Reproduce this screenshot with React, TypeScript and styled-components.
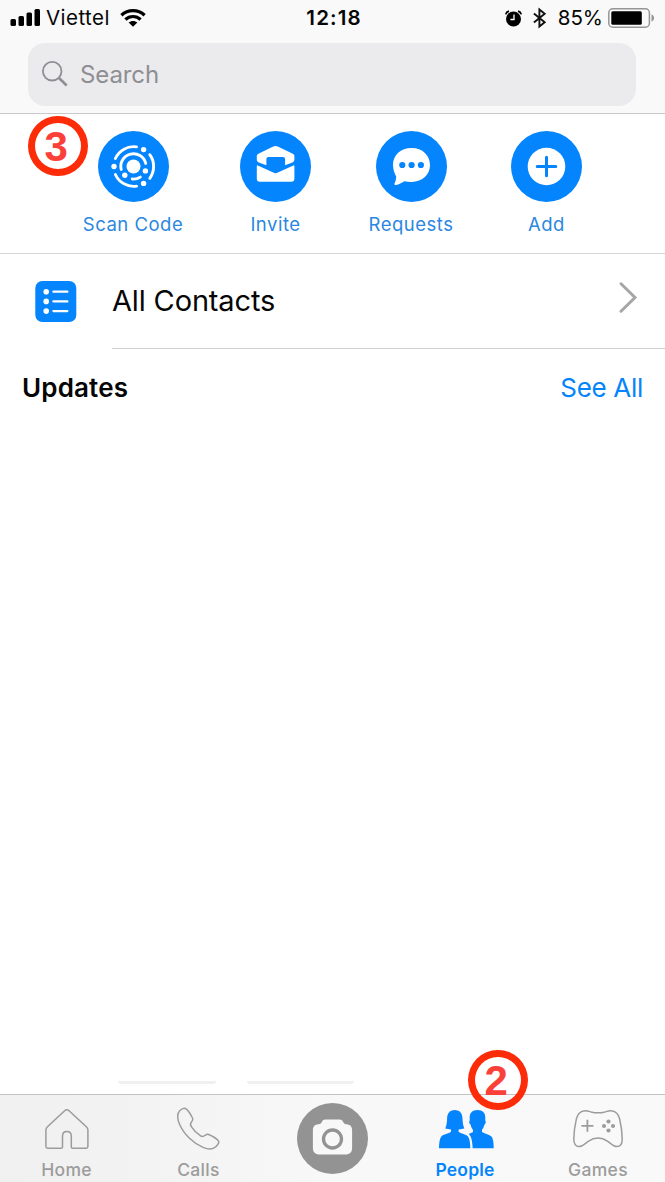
import React from "react";
import styled, { createGlobalStyle } from "styled-components";

const BLUE = "#0484fd";
const GREY = "#9c9c9c";

const GlobalStyle = createGlobalStyle`
  *, *::before, *::after { box-sizing: border-box; }
  body { margin: 0; background: #fff; }
  svg { display: block; flex: none; overflow: visible; }
`;

const Screen = styled.div`
  position: relative;
  display: flex;
  flex-direction: column;
  width: 665px;
  height: 1182px;
  overflow: hidden;
  background: #fff;
  color: #060606;
  font-family: Inter, "Liberation Sans", sans-serif;
`;

const Header = styled.header`
  flex: none;
  height: 114px;
  background: #f9f9f9;
  border-bottom: 1px solid #c9c9cb;
`;

const StatusBar = styled.div`
  display: grid;
  grid-template-columns: 1fr auto 1fr;
  align-items: center;
  height: 42px;
  padding: 0 10px 6px;
`;

const StatusGroup = styled.div<{ $end?: boolean }>`
  display: flex;
  align-items: center;
  justify-content: ${(p) => (p.$end ? "flex-end" : "flex-start")};
`;

const Carrier = styled.span`
  margin: 0 10px 0 6px;
  font-size: 20.5px;
  line-height: 24px;
  letter-spacing: 0.45px;
`;

const Clock = styled.span`
  padding-left: 3px;
  font-size: 20.5px;
  line-height: 24px;
  font-weight: 600;
  letter-spacing: 1.1px;
`;

const Percent = styled.span`
  margin: 0 5px 0 12px;
  font-size: 20.5px;
  line-height: 24px;
  letter-spacing: 0;
`;

const StatusIcons = styled.span`
  display: flex;
  align-items: center;
  gap: 11px;
`;

const SearchField = styled.div`
  display: flex;
  align-items: center;
  gap: 12px;
  width: 608px;
  height: 63px;
  margin: 1px 0 0 28px;
  padding: 0 0 1px 14px;
  border-radius: 17px;
  background: #ebebed;
  color: #8e8e93;
  font-size: 24px;
  letter-spacing: -0.1px;
`;

const Actions = styled.nav`
  display: flex;
  flex: none;
  justify-content: center;
  height: 140px;
  padding: 17px 0 0 8px;
  border-bottom: 1px solid #d6d6d8;
`;

const Action = styled.div<{ $width: number }>`
  display: flex;
  flex-direction: column;
  align-items: center;
  gap: 10px;
  width: ${(p) => p.$width}px;
  color: #2b87e0;
  font-size: 18.5px;
  line-height: 24px;
  letter-spacing: 0.5px;
  white-space: nowrap;
`;

const ContactsRow = styled.div`
  display: flex;
  flex: none;
  align-items: center;
  height: 95px;
  padding-left: 35px;
`;

const ContactsBody = styled.div`
  display: flex;
  flex: 1;
  align-items: center;
  justify-content: space-between;
  height: 95px;
  margin-left: 35px;
  padding: 0 28px 0 0;
  border-bottom: 1px solid #d0d0d2;
  font-size: 29px;
  letter-spacing: -0.15px;
`;

const ContactsLabel = styled.span`
  padding-bottom: 2px;
`;

const ChevronSlot = styled.span`
  padding-bottom: 8px;
`;

const Updates = styled.div`
  display: flex;
  justify-content: space-between;
  flex: 1;
  padding: 23px 22px 0;
  font-size: 26px;
  line-height: 32px;
`;

const Heading = styled.h2`
  margin: 0;
  font-size: 26px;
  font-weight: 600;
  letter-spacing: 0.15px;
`;

const SeeAll = styled.span`
  color: ${BLUE};
  letter-spacing: -0.3px;
`;

const CardEdges = styled.div`
  display: flex;
  flex: none;
  gap: 31px;
  height: 13px;
  padding-left: 118px;
`;

const CardEdge = styled.div<{ $width: number }>`
  width: ${(p) => p.$width}px;
  height: 3px;
  border-radius: 0 0 5px 5px;
  background: #f0f0f0;
`;

const TabBar = styled.nav`
  display: grid;
  flex: none;
  grid-template-columns: repeat(5, 1fr);
  height: 88px;
  border-top: 1px solid #c3c3c5;
  background: linear-gradient(90deg, #f1f0f0 0, #f4f3f3 160px, #f8f8f8 330px, #f9f9f9 100%);
`;

const Tab = styled.div<{ $active?: boolean; $trim?: number }>`
  display: flex;
  flex-direction: column;
  align-items: center;
  justify-content: space-between;
  padding: 8px ${(p) => p.$trim ?? 0}px 1px 0;
  color: ${(p) => (p.$active ? BLUE : GREY)};
  font-size: 17.5px;
  line-height: 22px;
  font-weight: ${(p) => (p.$active ? 600 : 500)};
  letter-spacing: ${(p) => (p.$active ? 0.15 : 0.3)}px;
`;

const Step = styled.div<{ $left: number; $top: number }>`
  position: absolute;
  left: ${(p) => p.$left}px;
  top: ${(p) => p.$top}px;
  display: flex;
  align-items: center;
  justify-content: center;
  width: 59.5px;
  height: 60px;
  padding: 2px 3px 0 0;
  border: 7px solid #fc2b08;
  border-radius: 50%;
  color: #fb4039;
  font: bold 42px/46px "Liberation Sans", sans-serif;
`;

const Signal = () => (
  <svg width="30" height="18" viewBox="0 0 30 18">
    <rect x="0.5" y="10" width="5.5" height="7" rx="1.5" />
    <rect x="8.5" y="7" width="5.5" height="10" rx="1.5" />
    <rect x="16.5" y="3.5" width="5.5" height="13.5" rx="1.5" />
    <rect x="24.5" y="0" width="5.5" height="17" rx="1.5" />
  </svg>
);

const Wifi = () => (
  <svg width="26" height="18" viewBox="0 0 26 18">
    <g fill="none" stroke="#000" strokeWidth="3.2">
      <path d="M1.400 6.200C8 .2 18 .2 24.600 6.200" />
      <path d="M5.400 10.500c4.300-4 10.900-4 15.200 0" />
    </g>
    <path d="M8.600 13.600c2.500-2.300 6.300-2.300 8.800 0L13 17.800Z" />
  </svg>
);

const Alarm = () => (
  <svg width="17" height="17" viewBox="0 0 17 17">
    <circle cx="8.5" cy="9" r="7.5" />
    <path d="M.7 4.400C1.100 2.800 2.400 1.500 4 1.100M16.300 4.400C15.900 2.800 14.600 1.500 13 1.100" fill="none" stroke="#000" strokeWidth="1.700" />
    <path d="M9 4.500v5H5.400" fill="none" stroke="#fff" strokeWidth="1.300" />
  </svg>
);

const Bluetooth = () => (
  <svg width="13" height="20" viewBox="0 0 13 20">
    <path d="m.9 5.400 10.800 8.800-5.300 4.400V1.400l5.300 4.400L.9 14.600" fill="none" stroke="#111" strokeWidth="1.900" />
  </svg>
);

const Battery = () => (
  <svg width="47" height="20" viewBox="0 0 47 20">
    <rect x="0.8" y="0.8" width="40.6" height="18.4" rx="4" fill="none" stroke="#969696" strokeWidth="1.5" />
    <rect x="3.3" y="3.2" width="30.5" height="13.6" rx="1.5" />
    <path d="M43.5 6.500c3.500 1.200 3.500 5.800 0 7Z" fill="#969696" />
  </svg>
);

const SearchIcon = () => (
  <svg width="26" height="26" viewBox="0 0 26 26" fill="none" stroke="#8e8e93">
    <circle cx="10.2" cy="10.2" r="9.3" strokeWidth="1.8" />
    <path d="m17 17 7.700 7.500" strokeWidth="2.6" />
  </svg>
);

const ScanIcon = () => (
  <svg width="71" height="71" viewBox="0 0 71 71">
    <circle cx="35.5" cy="35.5" r="35.5" fill={BLUE} />
    <g fill="none" stroke="#fff" strokeWidth="2.9" strokeLinecap="round">
      <path d="M38.500 15.900A19.900 19.900 0 0 0 17.400 27.500" />
      <path d="M17.400 43.500A19.900 19.900 0 0 0 38.500 55.100" />
      <path d="M51.800 23.700A20.100 20.100 0 0 1 51.800 47.300" />
      <path d="M23.200 38.400A12.600 12.600 0 1 1 47.700 32.400" />
      <path d="M34.200 48A12.600 12.600 0 0 0 42.300 46.100" />
    </g>
    <g fill="#fff">
      <circle cx="35.5" cy="35.5" r="7" />
      <circle cx="45.6" cy="18.6" r="2.7" />
      <circle cx="16" cy="35.5" r="2.7" />
      <circle cx="45.6" cy="52.4" r="2.7" />
      <circle cx="26.8" cy="44.3" r="2.7" />
      <circle cx="47.4" cy="39.9" r="2.7" />
    </g>
  </svg>
);

const InviteIcon = () => (
  <svg width="71" height="71" viewBox="0 0 71 71">
    <circle cx="35.5" cy="35.5" r="35.5" fill={BLUE} />
    <g fill="#fff">
      <path d="M16.800 25.200c0-1 .6-1.900 1.600-2.400l14.800-7.400c1.500-.7 3.100-.7 4.600 0l15 7.400c1 .5 1.600 1.400 1.600 2.400v3.400c0 1.400-.8 2.400-2 3l-7.300 2.600V28c0-1.300-.9-2.100-2.100-2.100H28.500c-1.200 0-2.100.8-2.100 2.100v6.200l-7.600-2.700c-1.200-.5-2-1.500-2-2.900Z" />
      <path d="M16.800 35c0-.5.5-.8 1-.6l15.500 7.200c1.500.8 3 .8 4.500 0l15.600-7.200c.5-.2 1 .1 1 .6v12.800a3 3 0 0 1-3 3H19.800a3 3 0 0 1-3-3Z" />
    </g>
  </svg>
);

const RequestsIcon = () => (
  <svg width="71" height="71" viewBox="0 0 71 71">
    <circle cx="35.5" cy="35.5" r="35.5" fill={BLUE} />
    <path d="M35.600 17C24.600 17 17 24.300 17 33.800c0 5 1.500 8.600 3.200 11.700 0 2.700-.7 5-1.700 7.100-.5 1.100.2 1.700 1.400 1.400 3.400-.7 5.500-2.200 8.500-3.800 2.100.5 4.600.7 7.200.7C46.600 50.900 54 43.500 54 34S46.600 17 35.600 17Z" fill="#fff" />
    <g fill={BLUE}>
      <circle cx="26.3" cy="34" r="3.1" />
      <circle cx="35.6" cy="34" r="3.1" />
      <circle cx="44.9" cy="34" r="3.1" />
    </g>
  </svg>
);

const AddIcon = () => (
  <svg width="71" height="71" viewBox="0 0 71 71">
    <circle cx="35.5" cy="35.5" r="35.5" fill={BLUE} />
    <circle cx="35.5" cy="35.5" r="18.8" fill="#fff" />
    <path d="M35.500 26.200v18.600M26.200 35.500h18.600" stroke={BLUE} strokeWidth="3" strokeLinecap="round" />
  </svg>
);

const ListIcon = () => (
  <svg width="42" height="41" viewBox="0 0 42 41">
    <rect x="0.3" y="0" width="41" height="41" rx="7" fill={BLUE} />
    <g fill="#fff">
      <circle cx="11.2" cy="10.7" r="2.8" />
      <circle cx="11.2" cy="20.4" r="2.8" />
      <circle cx="11.2" cy="30.1" r="2.8" />
    </g>
    <path d="M18.400 10.700h14M18.400 20.400h14M18.400 30.100h14" stroke="#fff" strokeWidth="2.2" strokeLinecap="round" />
  </svg>
);

const Chevron = () => (
  <svg width="18" height="31" viewBox="0 0 18 31">
    <path d="m2 1.800 14 13.700L2 29.200" fill="none" stroke="#a6a6a6" strokeWidth="3" strokeLinecap="round" />
  </svg>
);

const HomeIcon = () => (
  <svg width="44" height="47" viewBox="0 0 44 47" fill="none" stroke={GREY} strokeWidth="1.5">
    <path d="M.9 27c0-1.300.4-2.100 1.300-3L19.400 8c1.500-1.500 3.300-1.500 4.900 0l17.300 16c.9.900 1.300 1.700 1.300 3v16.500c0 1.100-.6 1.700-1.700 1.700H27.600c-.8 0-1.300-.5-1.300-1.300V33.300c0-2.900-1.700-4.700-4.400-4.700s-4.400 1.800-4.400 4.700v10.600c0 .8-.5 1.300-1.300 1.300H2.600c-1.100 0-1.700-.6-1.700-1.700Z" />
  </svg>
);

const PhoneIcon = () => (
  <svg width="43" height="47" viewBox="0 0 44 47" fill="none" stroke={GREY} strokeWidth="1.5">
    <path d="M3 7.200C5 5.300 7 4.300 8.600 5.100c2.700 1.300 5.700 6.600 7.400 10 .7 1.500-.2 2.600-1.100 3.700-1.300 1.600-1.700 2.600-.4 4.600 2.300 3.800 5.800 7.200 9.700 9.700 2 1.200 3 .7 4.600-.6 1.100-.8 2.100-1.500 3.600-.8 3.600 1.600 8.300 4.200 10 6.500 1 1.300-.4 3.700-2.400 5.700-3.200 3.200-8.500 3.100-13.300.9C16.500 40.500 7 31.400 2.500 20.900.8 16.900-.6 10.900 3 7.200Z" />
  </svg>
);

const CameraIcon = () => (
  <svg width="71" height="71" viewBox="0 0 71 71">
    <circle cx="35.5" cy="35.5" r="35.5" fill="#939393" />
    <path d="M28.500 16.500h14c2 0 2.900.8 3.700 2.500.7 1.500 1.700 2.200 3.300 2.200 3.600.2 5.600 2.200 5.600 5.800v17.700c0 4.500-2.300 6.800-6.800 6.800H22.700c-4.500 0-6.800-2.300-6.800-6.800V27c0-3.600 2-5.600 5.600-5.800 1.600 0 2.600-.7 3.300-2.200.8-1.700 1.700-2.500 3.700-2.500Z" fill="#f8f8f8" />
    <circle cx="35.5" cy="36" r="9" fill="none" stroke="#939393" strokeWidth="3.300" />
  </svg>
);

const PeopleIcon = () => (
  <svg width="52" height="47" viewBox="0 0 52 47" fill={BLUE}>
    <path d="M15.800 7C10.600 7 8.300 10.500 8.100 15.500 8 19.500 7.400 22.500 6.300 25.600c1.600.3 3.500.6 5.700.8v2.300C9.500 30.800 4.500 31 2.500 33.300.7 35.500 0 40 0 45.300h31.300c0-5.300-.7-9.800-2.500-12-2-2.300-6.700-2.500-9.200-4.600v-2.300c2.200-.2 4.100-.5 5.700-.8-1.100-3.100-1.700-6.100-1.800-10.100C23.300 10.500 21 7 15.800 7Z" />
    <path d="M38.500 7c-5.300 0-8 3-7.800 8l.1 2.600c-1.100.6-.6 3.600.9 4.200.3 2.200 1.100 3.700 2.300 5v2.300l-4.300 2c2.700 2.500 3.400 6 4 14.200h21c0-5.300-.5-9.700-2.300-11.700-1.900-2.100-6.300-2.600-9.400-4.500v-2.300c1.200-1.300 2-2.800 2.300-5 1.500-.6 2-3.600.9-4.200l.1-2.600C46.500 10 43.800 7 38.500 7Z" />
  </svg>
);

const GamesIcon = () => (
  <svg width="50" height="47" viewBox="0 0 50 47" fill="none" stroke={GREY} strokeWidth="1.5">
    <path d="M10.500 8c2.800-.6 4.600.1 7.500.9 4.500 1.100 9.500 1.100 14 0 2.900-.8 4.700-1.500 7.500-.9 3.800.7 6 3.400 7.100 7.800 1.600 6.700 2.500 13.700 2.600 20.200 0 4.800-1.800 7.600-5.200 7.600-3.700 0-6.200-3.200-9.200-5.300-6.200-4.200-13.400-4.200-19.600 0-3 2.100-5.500 5.300-9.200 5.300C2.600 43.600.8 40.800.8 36c.1-6.500 1-13.500 2.600-20.200C4.500 11.400 6.700 8.700 10.500 8Z" />
    <path d="M14.400 16.800v12M8.400 22.800h12" strokeWidth="1.8" />
    <g fill={GREY} stroke="none">
      <circle cx="35.5" cy="18.5" r="2.1" />
      <circle cx="31" cy="23" r="2.1" />
      <circle cx="40" cy="23" r="2.1" />
      <circle cx="35.5" cy="27.5" r="2.1" />
    </g>
  </svg>
);

export default function App() {
  return (
    <Screen>
      <GlobalStyle />
      <Header>
        <StatusBar>
          <StatusGroup>
            <Signal />
            <Carrier>Viettel</Carrier>
            <Wifi />
          </StatusGroup>
          <Clock>12:18</Clock>
          <StatusGroup $end>
            <StatusIcons>
              <Alarm />
              <Bluetooth />
            </StatusIcons>
            <Percent>85%</Percent>
            <Battery />
          </StatusGroup>
        </StatusBar>
        <SearchField>
          <SearchIcon />
          <span>Search</span>
        </SearchField>
      </Header>

      <Actions>
        <Action $width={149}><ScanIcon /><span>Scan Code</span></Action>
        <Action $width={136}><InviteIcon /><span>Invite</span></Action>
        <Action $width={135}><RequestsIcon /><span>Requests</span></Action>
        <Action $width={136}><AddIcon /><span>Add</span></Action>
      </Actions>

      <ContactsRow>
        <ListIcon />
        <ContactsBody>
          <ContactsLabel>All Contacts</ContactsLabel>
          <ChevronSlot><Chevron /></ChevronSlot>
        </ContactsBody>
      </ContactsRow>

      <Updates>
        <Heading>Updates</Heading>
        <SeeAll>See All</SeeAll>
      </Updates>

      <CardEdges>
        <CardEdge $width={98} />
        <CardEdge $width={107} />
      </CardEdges>

      <TabBar>
        <Tab><HomeIcon /><span>Home</span></Tab>
        <Tab $trim={2}><PhoneIcon /><span>Calls</span></Tab>
        <Tab><CameraIcon /></Tab>
        <Tab $active $trim={1}><PeopleIcon /><span>People</span></Tab>
        <Tab $trim={1}><GamesIcon /><span>Games</span></Tab>
      </TabBar>

      <Step $left={28} $top={115.5}>3</Step>
      <Step $left={468} $top={1050}>2</Step>
    </Screen>
  );
}
